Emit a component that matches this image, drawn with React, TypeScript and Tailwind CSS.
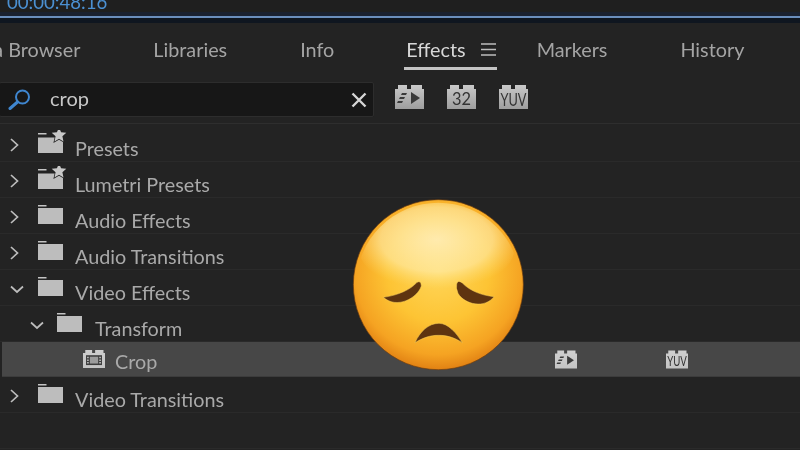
import React from "react";

const FONT = "font-['Lato','Open_Sans',sans-serif]";

function Chevron({ open, x }: { open?: boolean; x: number }) {
  return (
    <svg width="16" height="16" viewBox="0 0 16 16" className="shrink-0 mt-[2px]" style={{ marginLeft: x }}>
      <path
        d={open ? "M2 5.5 L8 11 L14 5.5" : "M5 2 L11.5 8 L5 14"}
        fill="none"
        stroke="#bdbdbd"
        strokeWidth="1.7"
      />
    </svg>
  );
}

function Folder({ star }: { star?: boolean }) {
  return (
    <svg width="30" height="26" viewBox="0 0 30 26" className="shrink-0 mb-[1px]">
      <rect x="0" y="3" width="8.5" height="1.5" fill="#c4c4c4" />
      {star ? (
        <>
          <rect x="0" y="7.500" width="25" height="15.500" fill="#bdbdbd" />
          <path
            d="M21 -2.500 L23.100 2.300 L28.300 2.800 L24.400 6.300 L25.500 11.400 L21 8.800 L16.500 11.400 L17.600 6.300 L13.700 2.800 L18.900 2.300 Z"
            fill="#c8c8c8"
            stroke="#232323"
            strokeWidth="1.500"
            paintOrder="stroke"
          />
        </>
      ) : (
        <rect x="0" y="6" width="25" height="16" fill="#bdbdbd" />
      )}
    </svg>
  );
}

function Brick({
  w = 29,
  h = 24,
  label,
  play,
  film,
  shadow,
}: {
  w?: number;
  h?: number;
  label?: string;
  play?: boolean;
  film?: boolean;
  shadow?: boolean;
}) {
  const id = `b${w}${label ?? ""}${play ? "p" : ""}${film ? "f" : ""}`;
  return (
    <svg width={w} height={h} viewBox="0 0 29 24" className="shrink-0">
      <defs>
        <linearGradient id={id} x1="0" y1="0" x2="0" y2="1">
          <stop offset="0" stopColor={shadow || film ? "#cfcfcf" : "#c9c9c9"} />
          <stop offset="1" stopColor={shadow || film ? "#c4c4c4" : "#9e9e9e"} />
        </linearGradient>
      </defs>
      <path d="M0 4 H3 V0 H12 V4 H16 V0 H27 V4 H29 V24 H0 Z" fill={`url(#${id})`} />
      {play && (
        <g fill="#3a3a3a">
          <path d="M16 7 L25 13 L16 19 Z" />
          <path d="M7 8 H12 L11 10 H6 Z M5 12 H10 L9 14 H4 Z M3 16 H8 L7 18 H2 Z" />
        </g>
      )}
      {film && (
        <g>
          <rect x="4" y="7" width="21" height="13" fill="#3c3c3c" />
          <rect x="9" y="9" width="11" height="9" fill="#9c9c9c" />
          <path
            d="M5.500 9 h2 v2 h-2 z M5.500 12.500 h2 v2 h-2 z M5.500 16 h2 v2 h-2 z M21.500 9 h2 v2 h-2 z M21.500 12.500 h2 v2 h-2 z M21.500 16 h2 v2 h-2 z"
            fill="#c9c9c9"
          />
        </g>
      )}
      {label && (
        <text
          x="14.5"
          y={label.length > 2 ? 20.5 : 20}
          textAnchor="middle"
          fontFamily="Lato, sans-serif"
          fontSize={label.length > 2 ? 17 : 18}
          fill="#333"
          textLength={label.length > 2 ? 26 : 19}
          lengthAdjust="spacingAndGlyphs"
        >
          {label}
        </text>
      )}
    </svg>
  );
}

function Row({
  children,
  h = "h-[36px]",
  active,
}: {
  children: React.ReactNode;
  h?: string;
  active?: boolean;
}) {
  return (
    <div
      className={`${h} flex items-center border-b ${
        active ? "bg-[#474747] border-[#3c3c3c] ml-[2px]" : "border-[#2a2a2a]"
      }`}
    >
      {children}
    </div>
  );
}

function Label({ text, className = "pt-[8px]" }: { text: string; className?: string }) {
  return (
    <span className={`text-[19.8px] leading-[26px] text-[#a9a9a9] whitespace-nowrap ${className}`}>
      {text}
    </span>
  );
}

function FolderRow({ text, star, open }: { text: string; star?: boolean; open?: boolean }) {
  return (
    <Row>
      <Chevron x={open ? 9 : 6} open={open} />
      <span className={open ? "ml-[13px] flex" : "ml-[16px] flex"}>
        <Folder star={star} />
      </span>
      <Label text={text} className="ml-[7px] pt-[8px]" />
    </Row>
  );
}

function Emoji() {
  return (
    <svg viewBox="0 0 600 570" width="200" height="190" className="absolute left-[340px] top-[190px]">
      <defs>
        <radialGradient id="face" cx="0.5" cy="0.42" r="0.6">
          <stop offset="0" stopColor="#ffd65a" />
          <stop offset="0.5" stopColor="#fdc434" />
          <stop offset="0.82" stopColor="#f5a322" />
          <stop offset="1" stopColor="#dd7a10" />
        </radialGradient>
        <radialGradient id="shine" cx="0.5" cy="0.42" r="0.55">
          <stop offset="0" stopColor="#fff0c0" stopOpacity="0.85" />
          <stop offset="0.65" stopColor="#ffeeb0" stopOpacity="0.6" />
          <stop offset="1" stopColor="#ffe27a" stopOpacity="0" />
        </radialGradient>
        <clipPath id="faceClip">
          <circle cx="295" cy="284" r="246" />
        </clipPath>
      </defs>
      <circle cx="295" cy="284" r="255" fill="url(#face)" stroke="#6e3c0e" strokeWidth="2" />
      <g clipPath="url(#faceClip)">
        <ellipse cx="290" cy="170" rx="235" ry="135" fill="url(#shine)" />
      </g>
      <g fill="#5e3410" stroke="#f9d15a" strokeWidth="1.500">
        <path d="M130 322 C175 316 213 298 231 277 Q243 270 244 288 C232 325 170 358 130 322 Z" />
        <path d="M350 282 Q353 268 367 279 C390 303 425 316 462 320 C435 356 375 345 354 310 Q347 295 350 282 Z" />
        <path d="M225 458 C240 425 265 400 297 400 C325 400 350 430 367 458 C340 441 320 436 295 436 C270 436 250 443 225 458 Z" />
      </g>
    </svg>
  );
}

export default function App() {
  return (
    <div className={`relative w-[800px] h-[450px] overflow-hidden bg-[#232323] blur-[0.4px] ${FONT}`}>
      <div className="h-[12px] bg-[#1f1f1f] overflow-hidden pl-[7px]">
        <div className="-mt-[10px] text-[18.6px] leading-[24px] text-[#4b90d2]">00:00:48:16</div>
      </div>
      <div className="h-[4px] bg-[#1a2130]" />
      <div className="h-[2px] bg-[#6a8ebd]" />
      <div className="h-[5px] bg-[#0f1620]" />

      <div className="h-[48px] flex items-center gap-[73px] -ml-[51px] text-[19.8px] leading-[26px] text-[#a4a4a4] whitespace-nowrap pt-[4px] relative">
        <span>Media Browser</span>
        <span>Libraries</span>
        <span>Info</span>
        <div className="relative flex items-center -mr-[32px] -ml-[1px]">
          <span className="text-[#d8d8d8]">Effects</span>
          <svg width="15" height="13" viewBox="0 0 15 13" className="ml-[15px]">
            <path d="M0 1 H15 M0 6.500 H15 M0 12 H15" stroke="#bdbdbd" strokeWidth="1.300" />
          </svg>
          <div className="absolute -left-[2px] w-[93px] top-[31px] h-[3px] bg-[#c4c4c4]" />
        </div>
        <span>Markers</span>
        <span>History</span>
      </div>

      <div className="h-[53px] flex items-start border-b border-[#2e2e2e] pt-[11px]">
        <div className="w-[375px] h-[35px] bg-[#171717] border border-[#2d2d2d] rounded-[2px] flex items-center -ml-[1px] shrink-0">
          <svg width="24" height="24" viewBox="0 0 24 24" className="ml-[8px]">
            <circle cx="14.500" cy="9" r="6.500" fill="none" stroke="#3f86cf" strokeWidth="2" />
            <path d="M9.500 14 L2 20.500" stroke="#3f86cf" strokeWidth="3" strokeLinecap="round" />
          </svg>
          <span className="ml-[18px] text-[20px] leading-[26px] pb-[3px] text-[#c8c8c8]">crop</span>
          <svg width="16" height="16" viewBox="0 0 16 16" className="ml-auto mr-[6px]">
            <path d="M1.500 1.500 L14.500 14.500 M14.500 1.500 L1.500 14.500" stroke="#d6d6d6" strokeWidth="2.400" />
          </svg>
        </div>
        <div className="flex gap-[23px] ml-[21px] mt-[3px]">
          <Brick play />
          <Brick label="32" />
          <Brick label="YUV" />
        </div>
      </div>
      <div className="h-[2px]" />

      <FolderRow text="Presets" star />
      <FolderRow text="Lumetri Presets" star />
      <FolderRow text="Audio Effects" />
      <FolderRow text="Audio Transitions" />
      <FolderRow text="Video Effects" open />
      <Row>
        <Chevron x={29} open />
        <span className="ml-[12px] flex">
          <Folder />
        </span>
        <Label text="Transform" className="ml-[8px] pt-[8px]" />
      </Row>
      <Row active h="h-[35px]">
        <span className="ml-[81px] flex">
          <Brick w={22} h={20} film shadow />
        </span>
        <Label text="Crop" className="ml-[10px] w-[440px] pt-[4px]" />
        <Brick w={22} h={21} play shadow />
        <span className="ml-[89px] flex">
          <Brick w={22} h={21} label="YUV" shadow />
        </span>
      </Row>
      <FolderRow text="Video Transitions" />
      <Row>{null}</Row>

      <Emoji />
    </div>
  );
}
